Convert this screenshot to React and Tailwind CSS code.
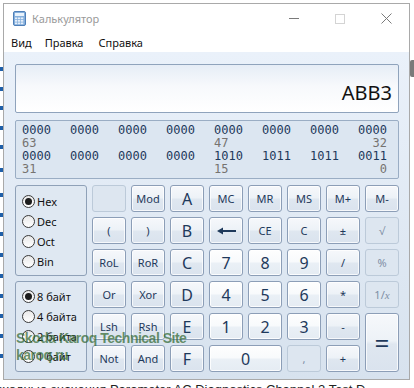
import React from "react";

const UI = { fontFamily: '"Noto Sans", "Open Sans", sans-serif' };
const MONO = { fontFamily: '"DejaVu Sans Mono", "Liberation Mono", monospace' };

function Btn({ children, kind = "n", className = "" }) {
  const styles = {
    n: "border-[#8c9eb7] text-[#1e395b] text-[11px] bg-[linear-gradient(to_bottom,#f6f8fb_0%,#edf2f7_47%,#dfe7f0_53%,#dae3ee_100%)] shadow-[inset_0_0_0_1px_rgba(255,255,255,0.75)]",
    h: "border-[#8c9eb7] text-[#1e395b] text-[16px] bg-[linear-gradient(to_bottom,#f6f8fb_0%,#edf2f7_47%,#dfe7f0_53%,#dae3ee_100%)] shadow-[inset_0_0_0_1px_rgba(255,255,255,0.75)]",
    d: "border-[#8c9eb7] text-[#1e395b] text-[16px] bg-[linear-gradient(to_bottom,#fefefe_0%,#f8fafc_47%,#eaf0f6_53%,#e5ecf3_100%)] shadow-[inset_0_0_0_1px_rgba(255,255,255,0.85)]",
    x: "border-[#bccad9] text-[#7d8ea5] text-[11px] bg-[#dde6f0]",
  };
  return (
    <div
      className={
        "flex items-center justify-center rounded-[3px] border leading-none " +
        styles[kind] +
        " " +
        className
      }
    >
      {children}
    </div>
  );
}

function Radio({ checked, label }) {
  return (
    <div className="flex h-[20px] items-center">
      <span className="flex h-[13px] w-[13px] items-center justify-center rounded-full border border-[#3a3a3a] bg-[linear-gradient(to_bottom,#e9e9e9,#ffffff)]">
        {checked && <span className="h-[7px] w-[7px] rounded-full bg-[#1c1c1c]" />}
      </span>
      <span className="ml-[2px] text-[11px] leading-none text-[#111]">{label}</span>
    </div>
  );
}

function Arrow() {
  return (
    <svg width="19" height="8" viewBox="0 0 19 8">
      <path d="M0 4 L6 0.5 L6 7.5 Z" fill="#1e395b" />
      <rect x="5" y="3" width="14" height="2" fill="#1e395b" />
    </svg>
  );
}

function CalcIcon() {
  return (
    <svg width="13" height="15" viewBox="0 0 13 15">
      <rect x="0.5" y="0.5" width="12" height="14" rx="1.5" fill="#86b0dc" stroke="#4f7fb8" />
      <rect x="2" y="2" width="9" height="3" fill="#eaf3fc" />
      {[6.5, 9, 11.5].map((y) =>
        [2, 5, 8].map((x) => (
          <rect key={x + "-" + y} x={x} y={y} width="2.3" height="1.7" fill="#e6effa" />
        ))
      )}
    </svg>
  );
}

export default function App() {
  const bits1 = ["0000", "0000", "0000", "0000", "0000", "0000", "0000", "0000"];
  const bits2 = ["0000", "0000", "0000", "0000", "1010", "1011", "1011", "0011"];
  const leftMarks = [69, 89, 108, 128, 147, 170, 195, 215, 234, 255, 276, 296, 316, 336, 356];

  return (
    <div className="relative h-[388px] w-[414px] overflow-hidden bg-white" style={UI}>
      {/* page behind the window */}
      {leftMarks.map((y) => (
        <div key={y} className="absolute left-0 h-[4px] w-[3px] bg-[#1f5fa8]" style={{ top: y - 2 }} />
      ))}
      <div className="absolute left-[410px] top-[60px] h-[17px] w-[6px] rounded-[2px] bg-[#7a7a7a]" />
      <div
        className="absolute left-[-4px] top-[383px] whitespace-nowrap text-[13px] leading-none text-[#222]"
        style={{ fontFamily: '"Liberation Sans", Arial, sans-serif' }}
      >
        сходные значения Parameter AC Diagnostics Channel 2 Test D
      </div>

      <div className="pl-[3px] pt-[3px]">
        <div className="relative flex h-[377px] w-[407px] flex-col border border-[#a9a9a9] bg-white">
          {/* title bar */}
          <div className="flex h-[29px] items-center">
            <div className="ml-[9px] flex items-center">
              <CalcIcon />
            </div>
            <span className="ml-[6px] text-[11px] leading-none text-[#9a9a9a]">Калькулятор</span>
            <div className="ml-auto flex h-full">
              <div className="flex h-full w-[46px] items-center justify-center">
                <div className="h-px w-[10px] bg-[#7a7a7a]" />
              </div>
              <div className="flex h-full w-[46px] items-center justify-center">
                <div className="h-[10px] w-[10px] border border-[#d4d4d4]" />
              </div>
              <div className="flex h-full w-[46px] items-center justify-center">
                <svg width="11" height="11" viewBox="0 0 11 11">
                  <path d="M0.5 0.5 L10.5 10.5 M10.5 0.5 L0.5 10.5" stroke="#7a7a7a" strokeWidth="1" />
                </svg>
              </div>
            </div>
          </div>
          {/* menu */}
          <div className="flex h-[19px] items-center text-[11px] leading-none text-[#111]">
            <span className="ml-[7px]">Вид</span>
            <span className="ml-[13px]">Правка</span>
            <span className="ml-[15px]">Справка</span>
          </div>
          {/* client */}
          <div className="flex flex-1 flex-col bg-[linear-gradient(to_bottom,#eaf1fa,#d7e2ee)] pb-[7px] pl-[11px] pr-[10px] pt-[12px]">
            <div className="flex h-[49px] items-end justify-end rounded-[2px] border border-[#8fa3bc] bg-[linear-gradient(to_bottom,#e6edf6_0%,#f7f9fc_45%,#ffffff_100%)] pb-[9px] pr-[6px]">
              <span className="text-[20px] leading-none text-[#111]">ABB3</span>
            </div>

            <div
              className="mt-[7px] h-[59px] rounded-[2px] border border-[#9aadc4] bg-[#dce6f1] pl-[6px] pt-[3px] text-[12px] leading-[13px]"
              style={MONO}
            >
              <div className="grid grid-cols-[repeat(8,29px)] gap-x-[19px] text-[#1e395b]">
                {bits1.map((b, i) => (
                  <span key={i}>{b}</span>
                ))}
              </div>
              <div className="grid grid-cols-[repeat(8,29px)] gap-x-[19px] text-[#767370]">
                <span className="col-start-1">63</span>
                <span className="col-start-5">47</span>
                <span className="col-start-8 text-right">32</span>
              </div>
              <div className="grid grid-cols-[repeat(8,29px)] gap-x-[19px] text-[#1e395b]">
                {bits2.map((b, i) => (
                  <span key={i}>{b}</span>
                ))}
              </div>
              <div className="grid grid-cols-[repeat(8,29px)] gap-x-[19px] text-[#767370]">
                <span className="col-start-1">31</span>
                <span className="col-start-5">15</span>
                <span className="col-start-8 text-right">0</span>
              </div>
            </div>

            <div className="mt-[6px] flex gap-[5px]">
              <div className="flex w-[72px] flex-col gap-[5px]">
                <div className="h-[91px] rounded-[3px] border border-[#8fa1b8] bg-[#dfe8f2] pl-[6px] pt-[5px]">
                  <Radio checked label="Hex" />
                  <Radio label="Dec" />
                  <Radio label="Oct" />
                  <Radio label="Bin" />
                </div>
                <div className="h-[91px] rounded-[3px] border border-[#8fa1b8] bg-[#dfe8f2] pl-[6px] pt-[4px]">
                  <Radio checked label="8 байт" />
                  <Radio label="4 байта" />
                  <Radio label="2 байта" />
                  <Radio label="1 байт" />
                </div>
              </div>

              <div className="grid grid-cols-[repeat(8,34px)] grid-rows-[repeat(6,27px)] gap-[5px]">
                <Btn kind="x"></Btn>
                <Btn>Mod</Btn>
                <Btn kind="h">A</Btn>
                <Btn>MC</Btn>
                <Btn>MR</Btn>
                <Btn>MS</Btn>
                <Btn>M+</Btn>
                <Btn>M-</Btn>

                <Btn>(</Btn>
                <Btn>)</Btn>
                <Btn kind="h">B</Btn>
                <Btn>
                  <Arrow />
                </Btn>
                <Btn>CE</Btn>
                <Btn>C</Btn>
                <Btn>±</Btn>
                <Btn kind="x">√</Btn>

                <Btn>RoL</Btn>
                <Btn>RoR</Btn>
                <Btn kind="h">C</Btn>
                <Btn kind="d">7</Btn>
                <Btn kind="d">8</Btn>
                <Btn kind="d">9</Btn>
                <Btn>/</Btn>
                <Btn kind="x">%</Btn>

                <Btn>Or</Btn>
                <Btn>Xor</Btn>
                <Btn kind="h">D</Btn>
                <Btn kind="d">4</Btn>
                <Btn kind="d">5</Btn>
                <Btn kind="d">6</Btn>
                <Btn>*</Btn>
                <Btn kind="x">
                  <span>
                    1/<span className="italic" style={{ fontFamily: '"Liberation Serif", serif' }}>x</span>
                  </span>
                </Btn>

                <Btn>Lsh</Btn>
                <Btn>Rsh</Btn>
                <Btn kind="h">E</Btn>
                <Btn kind="d">1</Btn>
                <Btn kind="d">2</Btn>
                <Btn kind="d">3</Btn>
                <Btn>-</Btn>
                <Btn kind="h" className="row-span-2 text-[26px]">
                  =
                </Btn>

                <Btn>Not</Btn>
                <Btn>And</Btn>
                <Btn kind="h">F</Btn>
                <Btn kind="d" className="col-span-2">
                  0
                </Btn>
                <Btn kind="x">,</Btn>
                <Btn>+</Btn>
              </div>
            </div>
          </div>

          {/* watermark overlay */}
          <div
            className="pointer-events-none absolute left-[12px] top-[326px] text-[14px] font-bold leading-[17px] tracking-[-0.5px] text-[rgba(50,105,50,0.72)]"
            style={{ fontFamily: '"Liberation Sans", Arial, sans-serif' }}
          >
            <div>Skoda Karoq Technical Site</div>
            <div>karoq.ru</div>
          </div>
        </div>
      </div>
    </div>
  );
}
